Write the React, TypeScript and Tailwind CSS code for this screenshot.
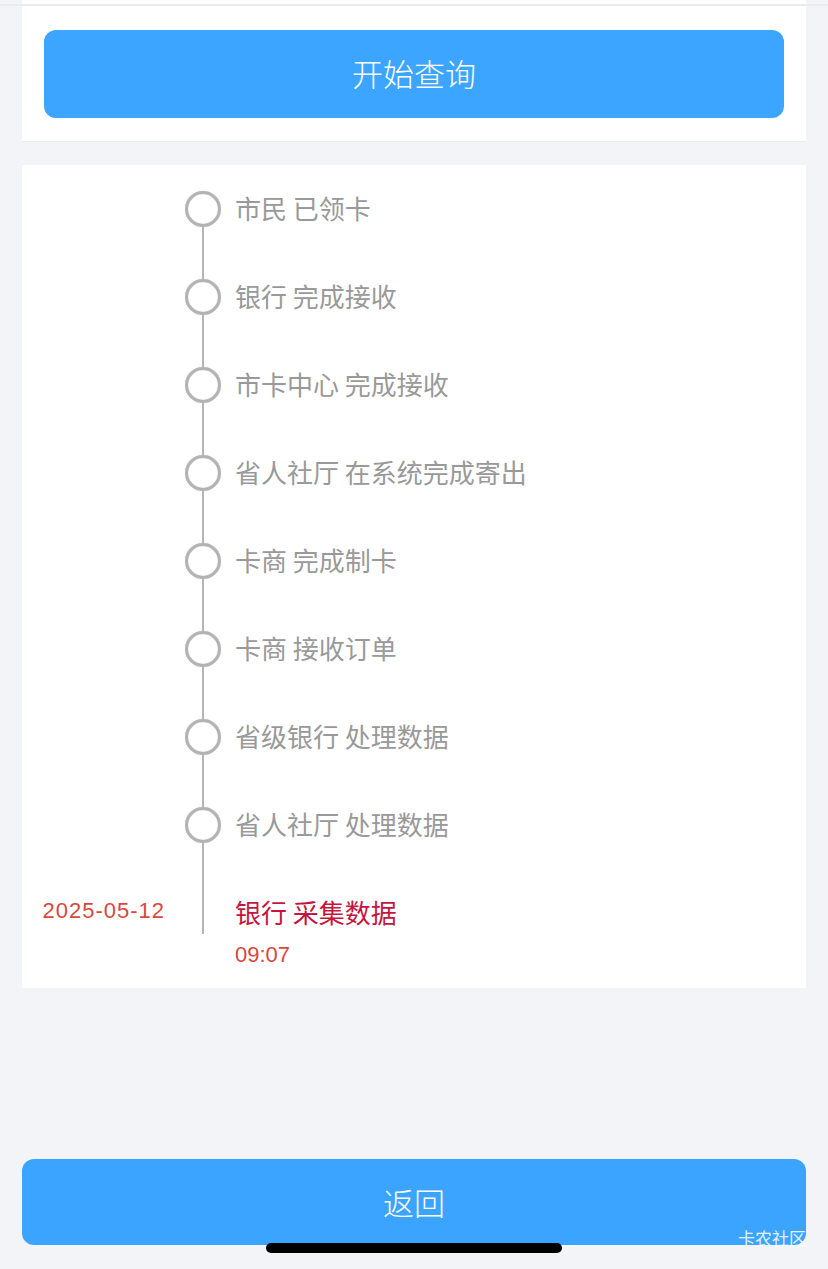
const steps = [
  "市民 已领卡",
  "银行 完成接收",
  "市卡中心 完成接收",
  "省人社厅 在系统完成寄出",
  "卡商 完成制卡",
  "卡商 接收订单",
  "省级银行 处理数据",
  "省人社厅 处理数据",
];

const latin = { fontFamily: '"Liberation Sans", "Noto Sans CJK SC", sans-serif' };

export default function App() {
  return (
    <div
      className="relative min-h-[1269px] bg-[#f2f4f8] overflow-hidden"
      style={{ fontFamily: '"Noto Sans CJK SC", "Noto Sans", sans-serif' }}
    >
      <div className="mx-[22px] h-[4px] bg-white" />
      <div className="h-[2px] bg-[#e9ebef]" />

      {/* query */}
      <div className="mx-[22px] bg-white pt-[24px] pb-[23px] px-[22px] border-b border-[#ebedf0]">
        <button className="w-full h-[88px] rounded-[12px] bg-[#3ba5ff] text-white text-[31px] font-light leading-none pb-[3px]">
          开始查询
        </button>
      </div>

      {/* timeline */}
      <div className="mx-[22px] mt-[23px] bg-white pt-[26px] pb-[19px]">
        {steps.map((s) => (
          <div key={s} className="flex h-[88px]">
            <div className="w-[163px] shrink-0" />
            <div className="w-[36px] shrink-0 flex flex-col items-center">
              <div className="w-[36px] h-[36px] rounded-full border-[3px] border-[#b3b3b3] shadow-[0_0_1px_#bbb,inset_0_0_1px_#bbb]" />
              <div className="w-[2px] flex-1 bg-[#b5b5b5]" />
            </div>
            <div className="pl-[14px] text-[26px] leading-[33px] text-[#999999]">{s}</div>
          </div>
        ))}
        <div className="flex">
          <div
            className="w-[163px] shrink-0 pr-[20px] pt-[1px] text-right text-[22px] leading-[30px] tracking-[1px] text-[#d8483e]"
            style={latin}
          >
            2025-05-12
          </div>
          <div className="w-[36px] shrink-0 flex justify-center">
            <div className="w-[2px] h-[39px] bg-[#b5b5b5]" />
          </div>
          <div className="pl-[14px]">
            <div className="text-[26px] leading-[34px] text-[#c4163e]">银行 采集数据</div>
            <div className="mt-[12px] text-[22px] leading-[28px] text-[#d8483e]" style={latin}>
              09:07
            </div>
          </div>
        </div>
      </div>

      {/* back */}
      <div className="mx-[22px] mt-[171px]">
        <button className="w-full h-[86px] rounded-[12px] bg-[#3aa4fe] text-white text-[31px] font-light leading-none pb-[2px]">
          返回
        </button>
      </div>

      <div className="absolute right-[22px] top-[1226px] text-[17px] leading-[24px] text-white/85">
        卡农社区
      </div>
      <div className="absolute left-[266px] top-[1243px] w-[296px] h-[10px] rounded-full bg-black" />
    </div>
  );
}
